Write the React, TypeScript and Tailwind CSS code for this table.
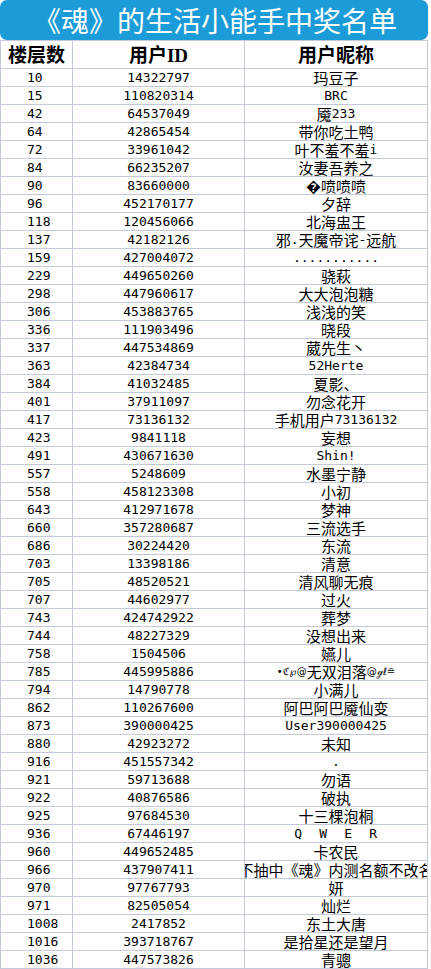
import React from 'react';

const rows: [string, string, string][] = [
  ['10', '14322797', '玛豆子'],
  ['15', '110820314', 'BRC'],
  ['42', '64537049', '魇233'],
  ['64', '42865454', '带你吃土鸭'],
  ['72', '33961042', '叶不羞不羞i'],
  ['84', '66235207', '汝妻吾养之'],
  ['90', '83660000', '\uFFFD喷喷喷'],
  ['96', '452170177', '夕辞'],
  ['118', '120456066', '北海盅王'],
  ['137', '42182126', '邪.天魔帝诧-远航'],
  ['159', '427004072', '...........'],
  ['229', '449650260', '骁萩'],
  ['298', '447960617', '大大泡泡糖'],
  ['306', '453883765', '浅浅的笑'],
  ['336', '111903496', '晓段'],
  ['337', '447534869', '葳先生丶'],
  ['363', '42384734', '52Herte'],
  ['384', '41032485', '夏影、'],
  ['401', '37911097', '勿念花开'],
  ['417', '73136132', '手机用户73136132'],
  ['423', '9841118', '妄想'],
  ['491', '430671630', 'Shin!'],
  ['557', '5248609', '水墨宁静'],
  ['558', '458123308', '小初'],
  ['643', '412971678', '梦神'],
  ['660', '357280687', '三流选手'],
  ['686', '30224420', '东流'],
  ['703', '13398186', '清意'],
  ['705', '48520521', '清风聊无痕'],
  ['707', '44602977', '过火'],
  ['743', '424742922', '葬梦'],
  ['744', '48227329', '没想出来'],
  ['758', '1504506', '嬿儿'],
  ['785', '445995886', '*'],
  ['794', '14790778', '小满儿'],
  ['862', '110267600', '阿巴阿巴魇仙变'],
  ['873', '390000425', 'User390000425'],
  ['880', '42923272', '未知'],
  ['916', '451557342', '.'],
  ['921', '59713688', '勿语'],
  ['922', '40876586', '破执'],
  ['925', '97684530', '十三棵泡桐'],
  ['936', '67446197', 'Q  W  E  R'],
  ['960', '449652485', '卡农民'],
  ['966', '437907411', '不抽中《魂》内测名额不改名'],
  ['970', '97767793', '妍'],
  ['971', '82505054', '灿烂'],
  ['1008', '2417852', '东土大唐'],
  ['1016', '393718767', '是拾星还是望月'],
  ['1036', '447573826', '青骢'],
];

const mono = "inline-block leading-[17px] font-['DejaVu_Sans_Mono',monospace] text-[13px]";
const cjk = "inline-block leading-[17px] font-['Noto_Sans_CJK_SC','Noto_Sans',sans-serif] text-[15px]";
const deco = "inline-block leading-[17px] font-['DejaVu_Sans',sans-serif] text-[10px]";

// ASCII runs in a thin mono face, everything else in the CJK face
function Mixed({ text }: { text: string }) {
  const parts = text.split(/([\u0000-\u007f]+)/).filter(Boolean);
  return (
    <span className="flex h-[17px] items-center whitespace-pre">
      {parts.map((p, i) =>
        /^[\u0000-\u007f]+$/.test(p) ? (
          <span key={i} className={p.includes('  ') ? mono + ' tracking-[0.5px]' : mono}>
            {p}
          </span>
        ) : (
          <span key={i} className={cjk}>
            {p}
          </span>
        )
      )}
    </span>
  );
}

function Fancy() {
  return (
    <span className="flex h-[17px] items-center whitespace-nowrap">
      <span className={deco}>•ℭ℘@</span>
      <span className={cjk}>无双泪落</span>
      <span className={deco}>@ℊℓ≘</span>
    </span>
  );
}

const line = 'border-[#c3c9da]';
const head = "font-['Liberation_Serif','Noto_Sans_CJK_SC',serif] text-[19px] font-bold leading-[24px]";

export default function App() {
  return (
    <div className="w-[431px] bg-white text-black">
      <div className="flex h-[40px] w-[428px] items-center justify-center rounded-[7px] bg-[#1b9bd7] pl-[2px]">
        <span className="font-['Noto_Sans_CJK_SC',sans-serif] text-[28px] leading-[36px] text-white">
          《魂》的生活小能手中奖名单
        </span>
      </div>
      <div className={`grid w-[428px] grid-cols-[73px_172px_183px] border-t ${line}`}>
        <div className={`flex h-[28px] items-center justify-center border-b border-l border-r pt-[2px] ${line}`}>
          <span className={head}>楼层数</span>
        </div>
        <div className={`flex h-[28px] items-center justify-center border-b border-r pt-[2px] ${line}`}>
          <span className={head}>用户ID</span>
        </div>
        <div className={`flex h-[28px] items-center justify-center border-b border-r pt-[2px] ${line}`}>
          <span className={head}>用户昵称</span>
        </div>
        {rows.map(([floor, id, name]) => (
          <React.Fragment key={floor}>
            <div className={`flex h-[18px] items-center border-b border-l border-r pl-[26px] ${line}`}>
              <span className={mono}>{floor}</span>
            </div>
            <div className={`flex h-[18px] items-center justify-center border-b border-r ${line}`}>
              <span className={mono}>{id}</span>
            </div>
            <div className={`flex h-[18px] items-center justify-center overflow-hidden border-b border-r ${line}`}>
              {name === '*' ? <Fancy /> : <Mixed text={name} />}
            </div>
          </React.Fragment>
        ))}
      </div>
    </div>
  );
}
